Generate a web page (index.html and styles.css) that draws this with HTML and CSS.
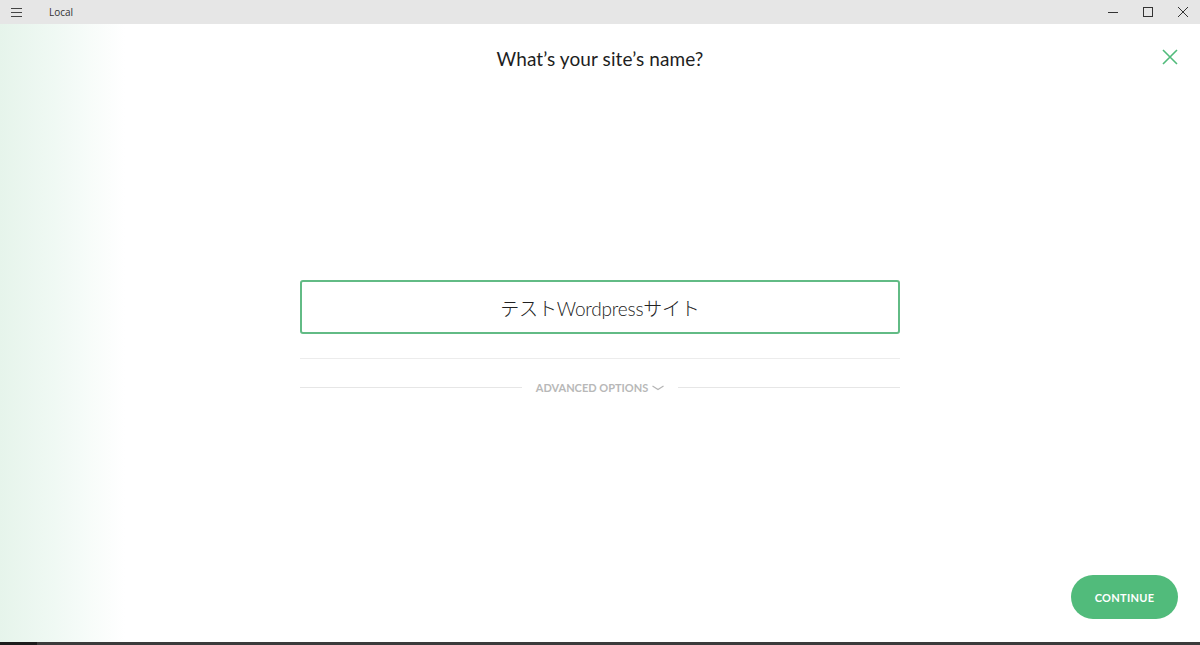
FILE: index.html
```html
<!DOCTYPE html>
<html lang="ja">
<head>
    <meta charset="UTF-8">
    <title>Local</title>
    <link rel="stylesheet" href="styles.css">
</head>
<body>
    <div class="titlebar">
        <div class="titlebar-left">
            <span class="menu-icon">
                <svg width="11" height="9" viewBox="0 0 11 9"><path d="M0 0.5H11M0 4.5H11M0 8.5H11" stroke="#444" stroke-width="1"/></svg>
            </span>
            <span class="app-name">Local</span>
        </div>
        <div class="window-controls">
            <span class="win-btn">
                <svg width="10" height="10" viewBox="0 0 10 10"><path d="M0 5.5H10" stroke="#333" stroke-width="1"/></svg>
            </span>
            <span class="win-btn">
                <svg width="10" height="10" viewBox="0 0 10 10"><rect x="0.5" y="0.5" width="9" height="9" fill="none" stroke="#333" stroke-width="1"/></svg>
            </span>
            <span class="win-btn">
                <svg width="10" height="10" viewBox="0 0 10 10"><path d="M0 0L10 10M10 0L0 10" stroke="#333" stroke-width="1"/></svg>
            </span>
        </div>
    </div>

    <div class="main">
        <div class="side-glow"></div>

        <div class="content">
            <h1 class="title">What’s your site’s name?</h1>

            <div class="form">
                <div class="site-input">テストWordpressサイト</div>
                <div class="divider"></div>
                <div class="advanced">
                    <span class="adv-line"></span>
                    <span class="adv-label">ADVANCED OPTIONS
                        <svg width="12" height="6" viewBox="0 0 12 6"><path d="M0.5 1L6 4.5L11.5 1" fill="none" stroke="#b5b5b5" stroke-width="1.2"/></svg>
                    </span>
                    <span class="adv-line"></span>
                </div>
            </div>
        </div>

        <button class="close-btn" aria-label="close">
            <svg width="16" height="16" viewBox="0 0 16 16"><path d="M1 1L15 15M15 1L1 15" stroke="#51bb7b" stroke-width="1.6"/></svg>
        </button>

        <button class="continue-btn">CONTINUE</button>
    </div>

    <div class="taskbar">
        <span class="taskbar-start"></span>
    </div>
</body>
</html>
```

FILE: styles.css
```css
/* Page */
body {
    margin: 0;
    font-family: Lato, "Noto Sans CJK JP", sans-serif;
    background: #ffffff;
    color: #222;
    height: 645px;
    overflow: hidden;
    display: flex;
    flex-direction: column;
}

/* Window title bar */
.titlebar {
    height: 24px;
    background: #e6e6e6;
    display: flex;
    align-items: center;
    justify-content: space-between;
    flex-shrink: 0;
}

.titlebar-left {
    display: flex;
    align-items: center;
}

.menu-icon {
    display: flex;
    padding-left: 11px;
    width: 38px;
}

.app-name {
    font-family: "Open Sans", sans-serif;
    font-size: 10px;
    color: #333;
}

.window-controls {
    display: flex;
}

.win-btn {
    width: 35px;
    height: 24px;
    display: flex;
    align-items: center;
    justify-content: center;
}

/* Main area */
.main {
    flex: 1;
    position: relative;
    display: flex;
}

.side-glow {
    position: absolute;
    left: 0;
    top: 0;
    bottom: 0;
    width: 125px;
    background: linear-gradient(90deg, #e6f4eb, #f0f9f4 45%, #ffffff);
}

.content {
    flex: 1;
    display: flex;
    flex-direction: column;
    align-items: center;
    position: relative;
}

.title {
    margin: 23px 0 0;
    font-size: 19px;
    font-weight: 400;
    color: #1e1e1e;
    letter-spacing: 0.1px;
}

.form {
    width: 600px;
    margin-top: 210px;
}

.site-input {
    height: 50px;
    border: 2px solid #62bb85;
    border-radius: 3px;
    display: flex;
    align-items: center;
    justify-content: center;
    font-size: 19px;
    font-weight: 300;
    color: #222;
    letter-spacing: -0.2px;
}

.divider {
    height: 1px;
    background: #ececec;
    margin-top: 24px;
}

.advanced {
    display: flex;
    align-items: center;
    margin-top: 22px;
    gap: 14px;
}

.adv-line {
    flex: 1;
    height: 1px;
    background: #e6e6e6;
}

.adv-label {
    font-size: 11px;
    font-weight: 700;
    color: #b8b8b8;
    display: flex;
    align-items: center;
    gap: 4px;
}

/* Buttons */
.close-btn {
    position: absolute;
    top: 25px;
    right: 22px;
    border: none;
    background: none;
    padding: 0;
    cursor: pointer;
    display: flex;
}

.continue-btn {
    position: absolute;
    right: 22px;
    bottom: 23px;
    width: 107px;
    height: 44px;
    border: none;
    border-radius: 22px;
    background: #51bb7b;
    color: #fff;
    font-family: Lato, sans-serif;
    font-size: 11px;
    font-weight: 700;
    letter-spacing: 0.3px;
    cursor: pointer;
}

/* Taskbar sliver */
.taskbar {
    height: 3px;
    background: #3b3b3b;
    flex-shrink: 0;
    display: flex;
}

.taskbar-start {
    width: 37px;
    background: #1c1c1c;
}
```
